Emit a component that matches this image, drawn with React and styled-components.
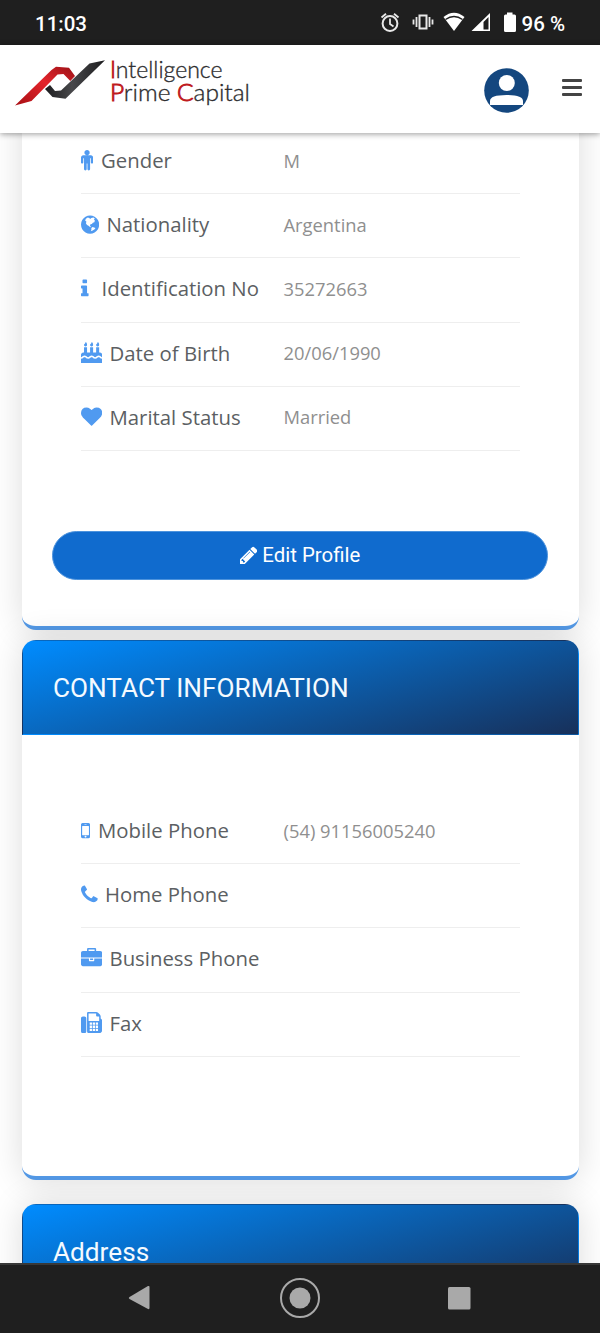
/* eslint-disable react/prop-types */
import styled, { createGlobalStyle } from 'styled-components';

const GlobalStyle = createGlobalStyle`
  * {
    box-sizing: border-box;
  }
  body {
    margin: 0;
    background: #fff;
    font-family: 'Open Sans', sans-serif;
  }
  h2, p {
    margin: 0;
    font-weight: 400;
  }
`;

const Screen = styled.div`
  display: flex;
  flex-direction: column;
  width: 600px;
  height: 1333px;
  overflow: hidden;
`;

const StatusBar = styled.div`
  display: flex;
  justify-content: space-between;
  align-items: center;
  flex: none;
  height: 45px;
  padding: 2px 35px 0 35px;
  background: #1f1f1f;
  color: #fff;
  font-family: Roboto, sans-serif;
  font-weight: 500;
  font-size: 20.5px;
`;

const StatusIcons = styled.div`
  display: flex;
  align-items: center;

  svg {
    display: block;
    margin: -3px 5px 0 0;
  }
`;

const Header = styled.header`
  display: flex;
  align-items: center;
  flex: none;
  z-index: 1;
  height: 88px;
  padding: 0 18px 0 14px;
  background: #fff;
  box-shadow: 0 1px 6px rgba(0, 0, 0, 0.4);
`;

const Logo = styled.svg`
  display: block;
  margin-top: -14px;
`;

const Avatar = styled.svg`
  display: block;
  margin: 2px 33px 0 auto;
`;

const MenuButton = styled.button`
  display: flex;
  flex-direction: column;
  gap: 4px;
  padding: 0;
  margin-top: -3px;
  border: 0;
  background: none;
`;

const MenuLine = styled.span`
  width: 20px;
  height: 3px;
  border-radius: 1px;
  background: #444;
`;

const Main = styled.main`
  display: flex;
  flex-direction: column;
  flex: 1;
  min-height: 0;
  padding: 0 21px 0 22px;
  overflow: hidden;
`;

const Card = styled.section`
  flex: none;
  height: ${(props) => props.$height}px;
  margin-top: ${(props) => props.$gap}px;
  border-bottom: 4px solid #5398e5;
  border-radius: 14px;
  background: #fff;
  box-shadow: 0 0 34px rgba(0, 0, 0, 0.14);
`;

const CardHeader = styled.div`
  height: 95px;
  padding: 31px 30px 0;
  border: 1px solid transparent;
  border-radius: 14px 14px 0 0;
  background: linear-gradient(165deg, #008cff, #17305a);
`;

const CardTitle = styled.h2`
  color: #f4faff;
  font-family: Roboto, sans-serif;
  font-size: 26.2px;
  line-height: 32px;
`;

const Rows = styled.div`
  padding: ${(props) => props.$top}px 59px 0;
`;

const Row = styled.div`
  display: flex;
  align-items: center;
  height: 64.2px;
  padding-bottom: 3px;
  border-bottom: 1px solid #eee;
`;

const Label = styled.div`
  display: flex;
  align-items: center;
  width: 202.5px;
  color: #5c5f63;
  font-size: 20.35px;
  white-space: nowrap;
`;

const IconSlot = styled.span`
  display: flex;
  width: ${(props) => props.$width}px;
  color: #509af0;

  svg {
    flex: none;
    display: block;
  }
`;

const Value = styled.p`
  color: #8f8f8f;
  font-size: 18.35px;
`;

const EditButton = styled.button`
  display: flex;
  justify-content: center;
  align-items: center;
  gap: 5px;
  width: 496px;
  height: 49px;
  margin: 80px 0 0 30px;
  border: 1px solid #4d93dd;
  border-radius: 25px;
  background: #106bce;
  color: #fff;
  font-family: Roboto, sans-serif;
  font-size: 20.4px;
`;

const NavBar = styled.nav`
  display: flex;
  justify-content: space-between;
  align-items: center;
  flex: none;
  z-index: 1;
  height: 70px;
  padding: 0 129px 2px 128px;
  border-top: 2px solid #383838;
  background: #1f1f1f;

  svg:nth-child(2) {
    margin-left: 2px;
  }
`;

// [left offset, drawn width, path], all on a 1792 unit em
const icons = {
  male: [
    0,
    1024,
    'M1024 640v416q0 40-28 68t-68 28-68-28-28-68V704h-64v912q0 46-33 79t-79 33-79-33-33-79v-464h-64v464q0 46-33 79t-79 33-79-33-33-79V704h-64v352q0 40-28 68t-68 28-68-28-28-68V640q0-80 56-136t136-56h640q80 0 136 56t56 136zM736 224q0 93-65.500 158.500T512 448t-158.500-65.500T288 224 353.500 65.500 512 0t158.500 65.500T736 224z',
  ],
  globe: [
    128,
    1536,
    'M896 128q209 0 385.500 103t279.500 279.500 103 385.500-103 385.500-279.500 279.500-385.500 103-385.500-103-279.500-279.500-103-385.500 103-385.500 279.500-279.500 385.500-103zM1180 290L1000 330 900 420 830 340 700 300 540 400 480 560 590 660 540 780 640 930 800 1010 900 1130 960 1080 880 960 940 860 1050 850 1130 740 1260 690 1300 560 1220 470 1300 380zM1110 1100L1000 1190 1010 1330 960 1460 1110 1400 1280 1290 1350 1180z',
  ],
  info: [
    576,
    640,
    'M1216 1344v128q0 26-19 45t-45 19h-512q-26 0-45-19t-19-45v-128q0-26 19-45t45-19h64v-384h-64q-26 0-45-19t-19-45v-128q0-26 19-45t45-19h384q26 0 45 19t19 45v576h64q26 0 45 19t19 45zm-128-1152v192q0 26-19 45t-45 19h-256q-26 0-45-19t-19-45v-192q0-26 19-45t45-19h256q26 0 45 19t19 45z',
  ],
  cake: [
    0,
    1792,
    'M1792 1408v384h-1792v-384q45 0 85-14t59-27.500 47-37.500q30-27 51.500-38t56.500-11q34 0 55.500 11t52.500 38q29 25 47 38t58 27 86 14q45 0 85-14.500t58-27 48-37.500q21-19 32.500-27t31-15 43.500-7q35 0 56.500 11t51.500 38q28 24 47 37.500t59 27.500 85 14 85-14 59-27.500 47-37.500q30-27 51.500-38t56.500-11q34 0 55.500 11t51.500 38q28 24 47 37.500t59 27.500 85 14zm0-320v192q-35 0-55.500-11t-52.500-38q-29-25-47-38t-58-27-85-14q-46 0-86 14t-58 27-47 38q-22 19-33 27t-31 15-44 7q-35 0-56.500-11t-51.500-38q-29-25-47-38t-58-27-86-14q-45 0-85 14.500t-58 27-48 37.500q-21 19-32.500 27t-31 15-43.500 7q-35 0-56.500-11t-51.500-38q-28-24-47-37.500t-59-27.500-85-14q-46 0-86 14t-58 27-47 38q-30 27-51.500 38t-56.500 11v-192q0-80 56-136t136-56h64v-448h256v448h256v-448h256v448h256v-448h256v448h64q80 0 136 56t56 136zM512 224q0 77-36 118.500T384 384q-53 0-90.500-37.500T256 256q0-29 9.500-51t23.500-34 31-28 31-31.500 23.500-44.500 9.500-67q38 0 83 74t45 150zm512 0q0 77-36 118.500T896 384q-53 0-90.500-37.500T768 256q0-29 9.500-51t23.500-34 31-28 31-31.500 23.500-44.500 9.500-67q38 0 83 74t45 150zm512 0q0 77-36 118.500t-92 41.500q-53 0-90.500-37.500T1280 256q0-29 9.500-51t23.500-34 31-28 31-31.500 23.500-44.500 9.500-67q38 0 83 74t45 150z',
  ],
  heart: [
    0,
    1792,
    'M896 1664q-26 0-44-18l-624-602q-10-8-27.500-26t-55.500-65.500-68-97.500-53.500-121-23.500-138q0-220 127-344t351-124q62 0 126.500 21.500t120 58 95.500 68.500 76 68q36-36 76-68t95.500-68.500 120-58 126.500-21.500q224 0 351 124t127 344q0 221-229 450l-623 600q-18 18-44 18z',
  ],
  mobile: [
    512,
    768,
    'M976 1408q0-33-23.500-56.500t-56.500-23.500-56.500 23.500-23.500 56.500 23.500 56.500 56.500 23.500 56.500-23.500 23.500-56.500zm208-160v-704q0-13-9.500-22.500t-22.500-9.500h-512q-13 0-22.500 9.500t-9.500 22.500v704q0 13 9.500 22.500t22.500 9.500h512q13 0 22.500-9.500t9.500-22.500zm-192-848q0-16-16-16h-160q-16 0-16 16t16 16h160q16 0 16-16zm288-16v1024q0 52-38 90t-90 38h-512q-52 0-90-38t-38-90v-1024q0-52 38-90t90-38h512q52 0 90 38t38 90z',
  ],
  phone: [
    192,
    1408,
    'M1600 1240q0 27-10 70.500t-21 68.500q-21 50-122 106-94 51-186 51-27 0-52.500-3.500t-57.500-12.500-47.500-14.500-55.500-20.500-49-18q-98-35-175-83-128-79-264.500-215.500t-215.500-264.500q-48-77-83-175-3-9-18-49t-20.500-55.500-14.500-47.500-12.500-57.500-3.500-52.500q0-92 51-186 56-101 106-122 25-11 68.500-21t70.500-10q14 0 21 3 18 6 53 76 11 19 30 54t35 63.500 31 53.500q3 4 17.500 25t21.500 35.500 7 28.500q0 20-28.500 50t-62 55-62 53-28.500 46q0 9 5 22.500t8.500 20.500 14 24 11.500 19q76 137 174 235t235 174q2 1 19 11.500t24 14 20.500 8.500 22.500 5q18 0 46-28.500t53-62 55-62 50-28.500q14 0 28.500 7t35.500 21.500 25 17.500q25 15 53.500 31t63.500 35 54 30q70 35 76 53 3 7 3 21z',
  ],
  briefcase: [
    0,
    1792,
    'M640 256h512v-128h-512v128zm1152 640v480q0 66-47 113t-113 47h-1472q-66 0-113-47t-47-113v-480h672v160q0 26 19 45t45 19h320q26 0 45-19t19-45v-160h672zm-768 0v128h-256v-128h256zm768-480v384h-1792v-384q0-66 47-113t113-47h352v-160q0-40 28-68t68-28h576q40 0 68 28t28 68v160h352q66 0 113 47t47 113z',
  ],
  fax: [
    0,
    1792,
    'M288 384q66 0 113 47t47 113v1088q0 66-47 113t-113 47h-128q-66 0-113-47t-47-113v-1088q0-66 47-113t113-47h128zm1376 163q58 34 93 93t35 128v768q0 106-75 181t-181 75h-864q-66 0-113-47t-47-113v-1536q0-40 28-68t68-28h672q40 0 88 20t76 48l152 152q28 28 48 76t20 88v163zM640 128v640h896V384h-160q-40 0-68-28t-28-68V128zM736 896v192h192V896zm256 0v192h192V896zm256 0v192h192V896zM736 1152v192h192v-192zm256 0v192h192v-192zm256 0v192h192v-192zM736 1408v192h192v-192zm256 0v192h192v-192zm256 0v192h192v-192z',
  ],
  pencil: [
    128,
    1536,
    'M491 1536l91-91-235-235-91 91v107h128v128h107zm523-928q0-22-22-22-10 0-17 7l-542 542q-7 7-7 17 0 22 22 22 10 0 17-7l542-542q7-7 7-17zm-54-192l416 416-832 832h-416v-416zm683 96q0 53-37 90l-166 166-416-416 166-165q36-38 90-38 53 0 91 38l235 234q37 39 37 91z',
  ],
};

function Icon({ name, size = 21.2 }) {
  const [left, width, path] = icons[name];
  return (
    <svg width={(width / 1792) * size} height={size} viewBox={`${left} 0 ${width} 1792`} fill="currentColor">
      <path fillRule="evenodd" d={path} />
    </svg>
  );
}

const profileRows = [
  { icon: 'male', slot: 20, label: 'Gender', value: 'M' },
  { icon: 'globe', slot: 25.5, label: 'Nationality', value: 'Argentina' },
  { icon: 'info', slot: 20.5, label: 'Identification No', value: '35272663' },
  { icon: 'cake', slot: 28.5, label: 'Date of Birth', value: '20/06/1990' },
  { icon: 'heart', slot: 28.5, label: 'Marital Status', value: 'Married' },
];

const contactRows = [
  { icon: 'mobile', slot: 17, label: 'Mobile Phone', value: '(54) 91156005240' },
  { icon: 'phone', slot: 24, label: 'Home Phone' },
  { icon: 'briefcase', slot: 28.5, label: 'Business Phone' },
  { icon: 'fax', slot: 28.5, label: 'Fax' },
];

function InfoRow({ icon, slot, label, value }) {
  return (
    <Row>
      <Label>
        <IconSlot $width={slot}>
          <Icon name={icon} />
        </IconSlot>
        {label}
      </Label>
      <Value>{value}</Value>
    </Row>
  );
}

function BrandLogo() {
  return (
    <Logo width="240" height="56" viewBox="14 54 240 56">
      <defs>
        <linearGradient id="red" x1="0" y1="1" x2="1" y2="0">
          <stop offset="0" stopColor="#a80f14" />
          <stop offset="0.55" stopColor="#e4242b" />
          <stop offset="1" stopColor="#9c1217" />
        </linearGradient>
        <linearGradient id="dark" x1="0" y1="0" x2="1" y2="0">
          <stop offset="0" stopColor="#1c1c1e" />
          <stop offset="0.45" stopColor="#48484b" />
          <stop offset="1" stopColor="#1c1c1e" />
        </linearGradient>
      </defs>
      <path fill="url(#red)" d="M15 105.500L51.500 70 56 66.800 69 67.700 75 76 70.300 81 63.500 74 57.500 74.500 31.500 101z" />
      <path fill="url(#dark)" d="M105 60.300L89.500 63.500 61 90.500 55 91 50 85 45 89 52.500 97 65.500 98.700z" />
      <g fontFamily="Lato, sans-serif" fontWeight="300" fontSize="23.500" fill="#2c2c2e" stroke="#2c2c2e" strokeWidth="0.350">
        <text x="110" y="77.800" textLength="112.500" lengthAdjust="spacingAndGlyphs">
          <tspan fill="#bf1a20" stroke="#bf1a20" strokeWidth="0.900">I</tspan>ntelligence
        </text>
        <text x="110" y="100.800" textLength="140" lengthAdjust="spacingAndGlyphs">
          <tspan fill="#bf1a20" stroke="#bf1a20" strokeWidth="0.900">P</tspan>rime{' '}
          <tspan fill="#bf1a20" stroke="#bf1a20" strokeWidth="0.900">C</tspan>apital
        </text>
      </g>
    </Logo>
  );
}

function App() {
  return (
    <>
      <GlobalStyle />
      <Screen>
        <StatusBar>
          <span>11:03</span>
          <StatusIcons>
            <svg width="137" height="24" viewBox="380 10 137 24" fill="none" stroke="#e8e8e8">
              <circle cx="390" cy="23.500" r="7.400" strokeWidth="2" />
              <path strokeWidth="1.800" d="M390 18.500v5.500l3.500 2.500M381.500 17.500l4.500-3.800M398.500 17.500l-4.500-3.800" />
              <rect x="419.500" y="15.500" width="7" height="13" strokeWidth="2" />
              <path strokeWidth="1.800" d="M416.500 17v10M429.500 17v10M413.500 19.500v5M432.500 19.500v5" />
              <path fill="#fff" stroke="none" d="M443.500 17q10.500-8.500 21 0L454 31z" />
              <path stroke="#1f1f1f" strokeWidth="1.500" d="M445.500 19.500q8.500-6 17 0" />
              <path fill="#fff" stroke="none" fillRule="evenodd" d="M471.500 31L490 13v18zM483.500 22v7.500h5V17z" />
              <path fill="#fff" stroke="none" d="M507 12.500h5.500v2h2q1.500 0 1.500 1.500v14.500q0 1.500-1.500 1.500h-9q-1.500 0-1.500-1.500V16q0-1.500 1.500-1.500h1.500z" />
            </svg>
            96 %
          </StatusIcons>
        </StatusBar>
        <Header>
          <BrandLogo />
          <Avatar width="45" height="45" viewBox="0 0 45 45">
            <circle cx="22.500" cy="22.500" r="22.300" fill="#14477f" />
            <circle cx="22.800" cy="15" r="8" fill="#fff" />
            <path fill="#fff" d="M6 37v-4q0-6 16.500-6T39 33v4z" />
          </Avatar>
          <MenuButton aria-label="Menu">
            <MenuLine />
            <MenuLine />
            <MenuLine />
          </MenuButton>
        </Header>
        <Main>
          <Card $height={537} $gap={-40}>
            <Rows $top={37}>
              {profileRows.map((row) => (
                <InfoRow key={row.label} {...row} />
              ))}
            </Rows>
            <EditButton>
              <Icon name="pencil" size={20.5} />
              Edit Profile
            </EditButton>
          </Card>
          <Card $height={540} $gap={10}>
            <CardHeader>
              <CardTitle>CONTACT INFORMATION</CardTitle>
            </CardHeader>
            <Rows $top={65}>
              {contactRows.map((row) => (
                <InfoRow key={row.label} {...row} />
              ))}
            </Rows>
          </Card>
          <Card $height={540} $gap={24}>
            <CardHeader>
              <CardTitle>Address</CardTitle>
            </CardHeader>
          </Card>
        </Main>
        <NavBar>
          <svg width="22" height="26" viewBox="0 0 22 26">
            <path fill="#a9a9a9" d="M1.500 12L20 1q1.500-.5 1.500 1v21q0 1.500-1.500 1L1.500 14q-1.500-1 0-2z" />
          </svg>
          <svg width="42" height="42" viewBox="0 0 42 42">
            <circle cx="21" cy="21" r="19" fill="none" stroke="#a9a9a9" strokeWidth="2" />
            <circle cx="21" cy="21" r="10.500" fill="#a9a9a9" />
          </svg>
          <svg width="23" height="23" viewBox="0 0 23 23">
            <rect width="22.500" height="22.500" rx="1.500" fill="#a9a9a9" />
          </svg>
        </NavBar>
      </Screen>
    </>
  );
}

export default App;
